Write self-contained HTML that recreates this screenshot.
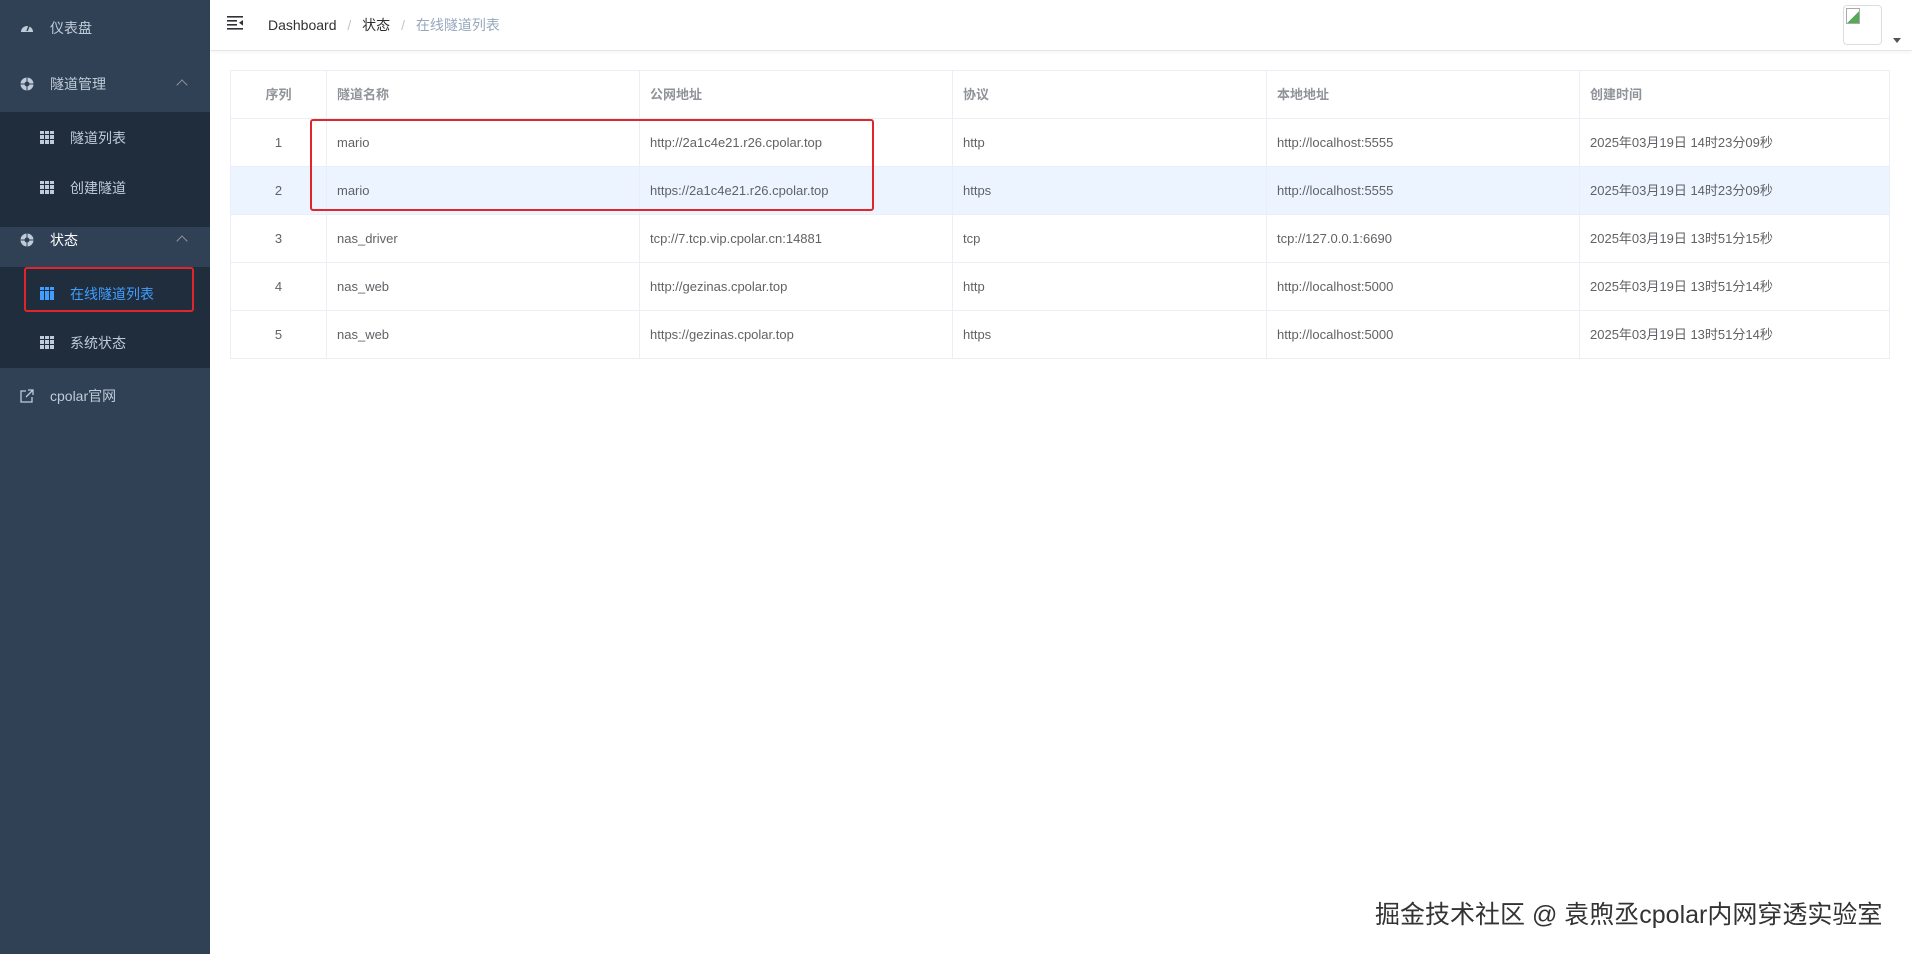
<!DOCTYPE html>
<html><head><meta charset="utf-8"><style>
*{margin:0;padding:0;box-sizing:border-box}
body{width:1912px;height:954px;overflow:hidden;font-family:"Liberation Sans","Noto Sans CJK SC",sans-serif;font-size:14px;color:#606266;background:#fff;position:relative}
.sb{position:absolute;left:0;top:0;width:210px;height:954px;background:#304156}
.it{position:absolute;left:0;width:210px;height:56px;color:#bfcbd9;font-size:14px}
.it .ic{position:absolute;left:20px;width:14px;height:14px;top:21px}
.it span{position:absolute;left:50px;top:19px;line-height:18px}
.sub{position:absolute;left:0;width:210px;background:#1f2d3d}
.si{position:absolute;left:0;width:210px;height:50px;color:#bfcbd9}
.si .g{position:absolute;left:40px;top:18px;width:14px;height:13px;background:
linear-gradient(90deg,transparent 4px,#1f2d3d 4px,#1f2d3d 5px,transparent 5px,transparent 9px,#1f2d3d 9px,#1f2d3d 10px,transparent 10px),
linear-gradient(transparent 3px,#1f2d3d 3px,#1f2d3d 4px,transparent 4px,transparent 8px,#1f2d3d 8px,#1f2d3d 9px,transparent 9px),#bfcbd9}
.si span{position:absolute;left:70px;top:16px;line-height:18px}
.arr{position:absolute;left:178px;top:25px;width:8px;height:8px;border-left:1px solid #909399;border-top:1px solid #909399;transform:rotate(45deg)}
.hd{position:absolute;left:210px;top:0;right:0;height:51px;border-bottom:1px solid #e6e6e6;box-shadow:0 1px 4px rgba(0,21,41,.05)}
table{position:absolute;left:230px;top:70px;width:1660px;border-collapse:collapse;border:1px solid #ebeef5}
td,th{border:1px solid #ebeef5;height:48px;padding:0 10px;text-align:left;font-weight:bold;font-size:13px;line-height:18px;vertical-align:middle}
th{color:#909399}
td{font-weight:normal;color:#606266}
td:first-child,th:first-child{text-align:center}
tr.hl td{background:#ecf5ff}
.red{position:absolute;border:2px solid #e0262a;border-radius:3px}
</style></head><body>
<div class="sb">
 <div class="it" style="top:0px"><svg class="ic" viewBox="0 0 14 14"><path d="M1 11A6 6 0 1 1 13 11Z" fill="#bfcbd9"/><path d="M7 10L9 5" stroke="#304156" stroke-width="1.5"/></svg><span>仪表盘</span></div>
 <div class="it" style="top:56px"><svg class="ic" viewBox="0 0 14 14"><circle cx="7" cy="7" r="6.5" fill="#bfcbd9"/><circle cx="7" cy="7" r="2.5" fill="#304156"/><path d="M7 0V14M0 7H14" stroke="#304156" stroke-width="1"/></svg><span>隧道管理</span><div class="arr"></div></div>
 <div class="sub" style="top:112px;height:115px">
  <div class="si" style="top:1px"><div class="g"></div><span>隧道列表</span></div>
  <div class="si" style="top:51px"><div class="g"></div><span>创建隧道</span></div>
 </div>
 <div class="it" style="top:212px"><svg class="ic" viewBox="0 0 14 14"><circle cx="7" cy="7" r="6.5" fill="#bfcbd9"/><circle cx="7" cy="7" r="2.5" fill="#304156"/><path d="M7 0V14M0 7H14" stroke="#304156" stroke-width="1"/></svg><span style="color:#fff">状态</span><div class="arr"></div></div>
 <div class="sub" style="top:267px;height:101px">
  <div class="si" style="top:2px;color:#409eff"><div class="g" style="background:linear-gradient(90deg,transparent 4px,#1f2d3d 4px,#1f2d3d 5px,transparent 5px,transparent 9px,#1f2d3d 9px,#1f2d3d 10px,transparent 10px),linear-gradient(transparent 3px,#1f2d3d 3px,#1f2d3d 4px,transparent 4px),#409eff"></div><span>在线隧道列表</span></div>
  <div class="si" style="top:51px"><div class="g"></div><span>系统状态</span></div>
 </div>
 <div class="it" style="top:368px"><svg class="ic" viewBox="0 0 14 14" fill="none" stroke="#bfcbd9" stroke-width="1.3"><path d="M6 2H1V13H12V8M8 1H13V6M13 1L6 8"/></svg><span>cpolar官网</span></div>
 <div class="red" style="left:24px;top:267px;width:170px;height:45px"></div>
</div>
<div class="hd">
 <svg style="position:absolute;left:17px;top:16px" width="16" height="14" viewBox="0 0 16 14" fill="#303133"><rect x="0" y="0" width="16" height="1.6"/><rect x="0" y="4" width="10" height="1.6"/><rect x="0" y="8" width="10" height="1.6"/><rect x="0" y="12" width="16" height="1.6"/><path d="M16 4L12 6.8L16 9.6Z"/></svg>
 <div style="position:absolute;left:58px;top:15px;font-size:14px;color:#303133">Dashboard <span style="color:#c0c4cc;margin:0 7px">/</span> 状态 <span style="color:#c0c4cc;margin:0 7px">/</span> <span style="color:#97a8be">在线隧道列表</span></div>
 <div style="position:absolute;left:1633px;top:5px;width:39px;height:40px;border:1px solid #ddd;border-radius:4px;background:#fff"><div style="position:absolute;left:2px;top:2px;width:14px;height:16px;border:1px solid #aaa;background:linear-gradient(135deg,#fff 55%,#5a5 55%)"></div></div>
 <div style="position:absolute;left:1683px;top:38px;border:4px solid transparent;border-top:5px solid #555"></div>
</div>
<table>
<tr><th style="width:96px">序列</th><th style="width:313px">隧道名称</th><th style="width:313px">公网地址</th><th style="width:314px">协议</th><th style="width:313px">本地地址</th><th>创建时间</th></tr>
<tr><td>1</td><td>mario</td><td>http://2a1c4e21.r26.cpolar.top</td><td>http</td><td>http://localhost:5555</td><td>2025年03月19日 14时23分09秒</td></tr>
<tr class="hl"><td>2</td><td>mario</td><td>https://2a1c4e21.r26.cpolar.top</td><td>https</td><td>http://localhost:5555</td><td>2025年03月19日 14时23分09秒</td></tr>
<tr><td>3</td><td>nas_driver</td><td>tcp://7.tcp.vip.cpolar.cn:14881</td><td>tcp</td><td>tcp://127.0.0.1:6690</td><td>2025年03月19日 13时51分15秒</td></tr>
<tr><td>4</td><td>nas_web</td><td>http://gezinas.cpolar.top</td><td>http</td><td>http://localhost:5000</td><td>2025年03月19日 13时51分14秒</td></tr>
<tr><td>5</td><td>nas_web</td><td>https://gezinas.cpolar.top</td><td>https</td><td>http://localhost:5000</td><td>2025年03月19日 13时51分14秒</td></tr>
</table>
<div class="red" style="left:310px;top:119px;width:564px;height:92px"></div>
<div style="position:absolute;left:1375px;top:895px;font-size:25px;color:#333;text-shadow:0 0 2px #fff,0 0 2px #fff;white-space:nowrap">掘金技术社区 @ 袁煦丞cpolar内网穿透实验室</div>
</body></html>
